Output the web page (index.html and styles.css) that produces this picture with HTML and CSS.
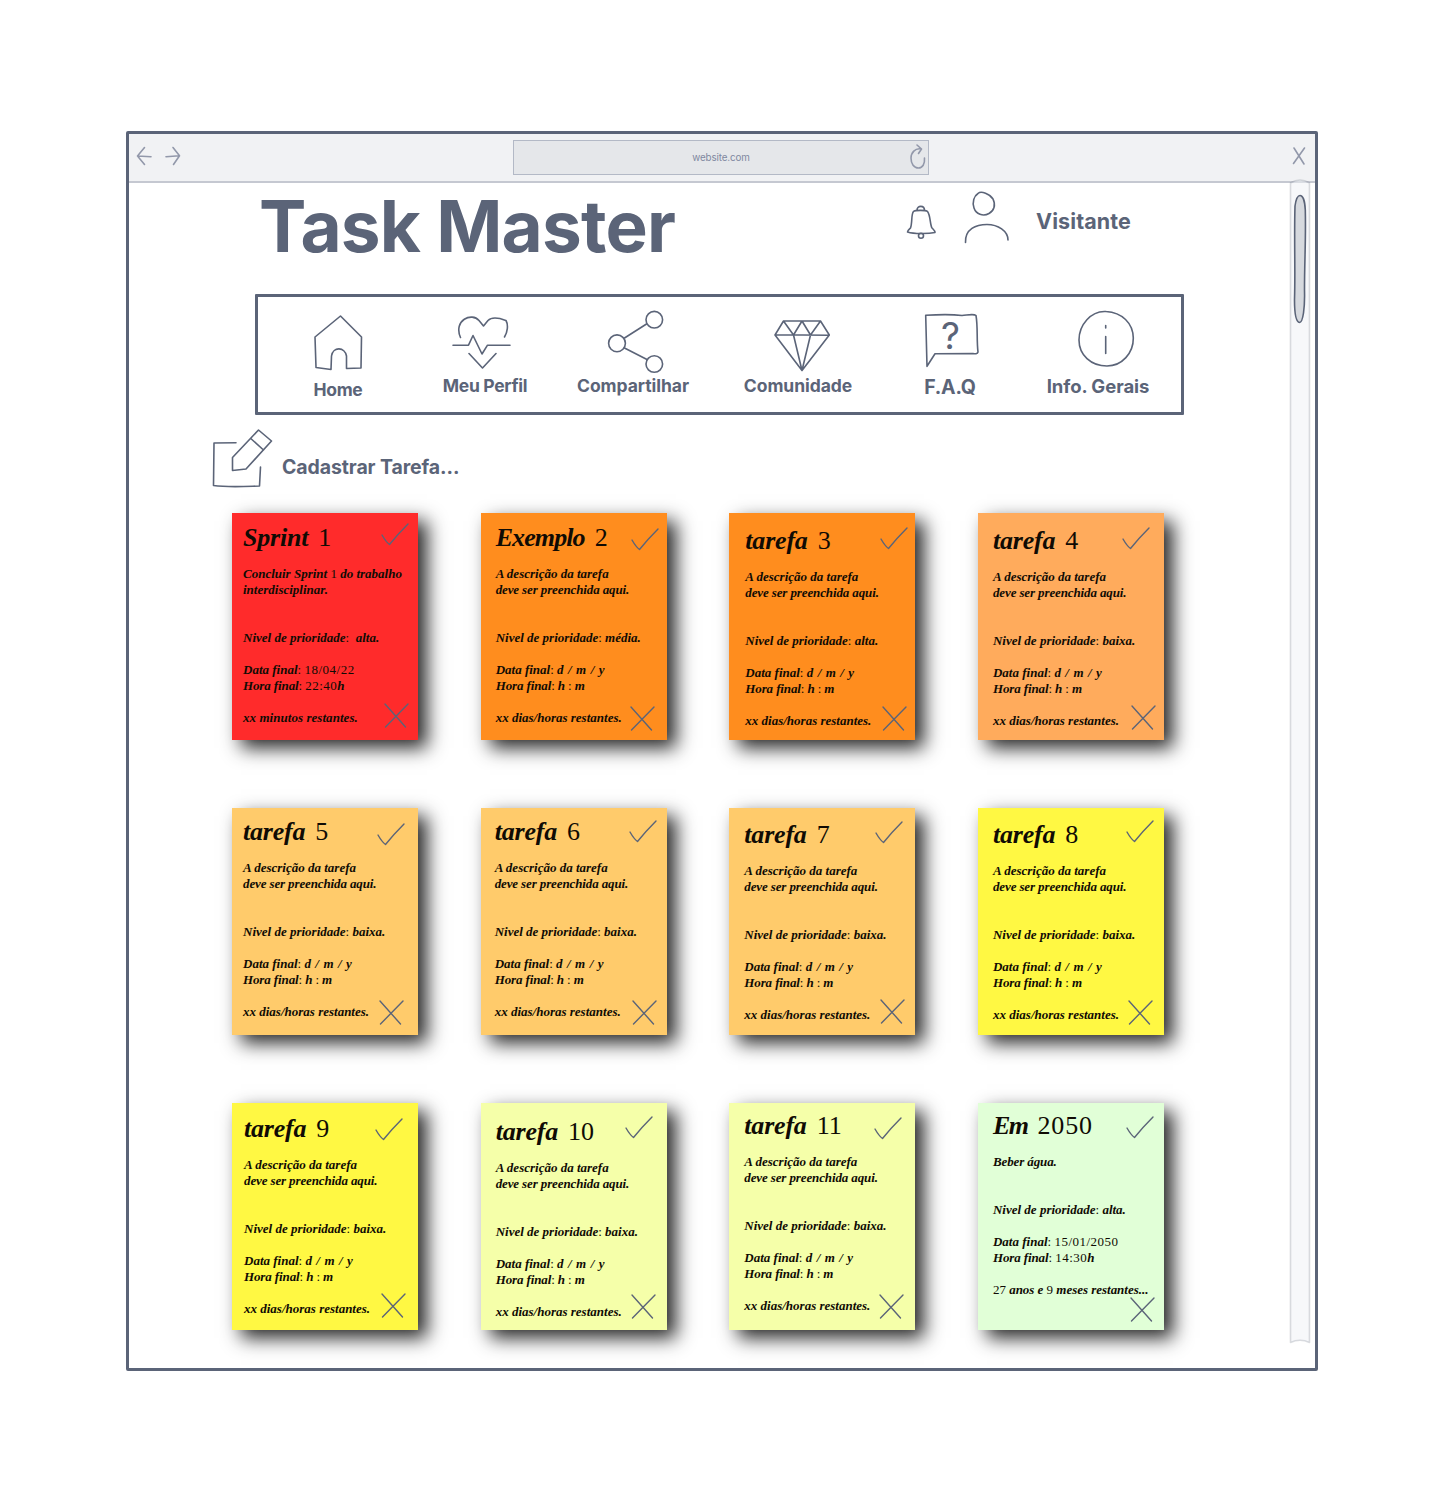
FILE: index.html
```html
<!DOCTYPE html>
<html lang="pt-BR">
<head>
<meta charset="utf-8">
<title>Task Master</title>
<link rel="stylesheet" href="styles.css">
</head>
<body>
<div class="window">
  <div class="toolbar">
    <svg class="arrows" viewBox="0 0 46 20"><path d="M8.500 1.500L1.500 10L8.500 18.500M1.500 10L15 10.700M37 1.500L43.500 9.800L37.500 18.500M43.500 9.800L30 10.700"/></svg>
    <div class="address"><span class="url">website.com</span>
      <svg class="reload" viewBox="0 0 18 26"><path d="M8 1L12.500 5L9.500 9.500M12.500 5C6 3.500 2 9 2 14C2 20 5 24 9.500 24C13.500 24 16 20 15.500 14"/></svg>
    </div>
    <svg class="close" viewBox="0 0 14 18"><path d="M2 1L12 17M12.500 1L1.500 16.500"/></svg>
  </div>

  <main>
    <header class="masthead">
      <h1>Task Master</h1>
      <div class="user">
        <svg class="bell" viewBox="0 0 30 34"><path d="M7.500 6.500C9 5 20 5 21.500 6.500C24.500 10 24 20 26 23C27.500 24.500 29 25.500 29 27.500C22 29 8 29 1.500 27C1.500 25.500 3 24.500 4.500 23C6.500 18 5 9 7.500 6.500M11 5.500C11 0 18.500 0 18.500 5.500"/><circle cx="15" cy="30.700" r="2.500"/></svg>
        <svg class="person" viewBox="0 0 46 52"><path d="M14 2.500C17-.500 26 3 29 8C32 14 30 20 25 22.500C19 26 12 23 10 17C8 11 10 5 14 2.500M1.500 51.500C1 38 12 33.500 23 33.500C34 33.500 44 40 44 49"/></svg>
        <span class="user-name">Visitante</span>
      </div>
    </header>

    <nav class="menu">
      <a class="item home"><svg viewBox="258 297 160 75"><path d="M340.500 316L361.500 337L361 368L346.500 368.500V356C345 347 333 346 331.500 356L331 369.500L316 367.500L315 337Z"/></svg><span>Home</span></a>
      <a class="item profile"><svg viewBox="418 297 134 75"><path d="M460.500 337.500C453 320 472 312 479 320.500L483.500 326L488 320.500C493 315.500 502 319 506 320.500C508.500 325 507.500 332 504.500 337M453 345.200H468.500L473 335.500L482 354L487.500 345.200H510M469 353.500L482.500 368L496 353.500"/></svg><span>Meu Perfil</span></a>
      <a class="item share"><svg viewBox="552 297 162 75"><circle cx="654.300" cy="319.700" r="8.300"/><circle cx="617" cy="343.300" r="8.400"/><circle cx="654.300" cy="364" r="8.300"/><path d="M624.500 338L646.500 324M624.500 348L647 359.500"/></svg><span>Compartilhar</span></a>
      <a class="item community"><svg viewBox="714 297 168 75"><path d="M783.500 321H820.500L829.300 335L802 370.500L775 335ZM775 334.700L829.300 335.200M783.500 321L793.500 335L802 321L810.500 335L820.500 321M793.500 335L802 370.500L810.500 335"/></svg><span>Comunidade</span></a>
      <a class="item faq"><svg viewBox="882 297 136 75"><path d="M925.700 315.300C938 314.500 950 314 962 315.500C968 315 974 313.500 976 315.500C978 327 976.500 340 978 352C977.500 354 975 354 973 353.500L935 353.700L927 366.300Z"/><text class="mark" x="950.500" y="349">?</text></svg><span>F.A.Q</span></a>
      <a class="item info"><svg viewBox="1018 297 160 75"><path d="M1106 311.500C1122 312.500 1133 323 1133.300 338C1133.500 353 1122 366 1107 366C1091 366 1079 355 1079 340C1079 325 1091 310.500 1106 311.500M1105.700 325.500V328M1105.700 336.500V353.500"/></svg><span>Info. Gerais</span></a>
    </nav>

    <div class="create">
      <svg viewBox="212 429 61 60"><path d="M236 442.700L214 443L213.500 485.500C228 487.500 244 486.500 259.500 486L260.500 467M232.500 457.500L258.500 430L271.500 441L246 469L232.500 470.500ZM250.800 438.500L263.500 450"/></svg>
      <span>Cadastrar Tarefa...</span>
    </div>

    <section class="notes">
      <article class="note n1 red">
        <h2><span class="word">Sprint</span><i>1</i></h2>
        <p class="l-own">Concluir Sprint <i>1</i> do trabalho</p><p>interdisciplinar.</p>
        <p class="priority">Nivel de prioridade<i>:</i>&nbsp; alta.</p>
        <p class="l-date">Data final<i>:</i> <i class="num">18/04/22</i></p><p class="l-time">Hora final<i>:</i> <i class="num">22:40</i>h</p>
        <p class="left l-min">xx minutos restantes.</p>
        <svg class="check" viewBox="-1 -1 28 23"><path d="M0 11Q4 18 7.500 20.500Q16 10 26 0"/></svg><svg class="cross" viewBox="-1 -1 25 25"><path d="M0 0L20.500 23M23 0L.500 23"/></svg>
      </article>
      <article class="note n2 orange">
        <h2><span class="word long">Exemplo</span><i>2</i></h2>
        <p class="l-a">A descrição da tarefa</p><p class="l-b">deve ser preenchida aqui.</p>
        <p class="priority">Nivel de prioridade<i>:</i> média.</p>
        <p class="l-date">Data final<i>:</i> <b>d / m / y</b></p><p class="l-time">Hora final<i>:</i> h <i>:</i> m</p>
        <p class="left">xx dias/horas restantes.</p>
        <svg class="check" viewBox="-1 -1 28 23"><path d="M0 11Q4 18 7.500 20.500Q16 10 26 0"/></svg><svg class="cross" viewBox="-1 -1 25 25"><path d="M0 0L20.500 23M23 0L.500 23"/></svg>
      </article>
      <article class="note n3 orange">
        <h2><span class="word">tarefa</span><i>3</i></h2>
        <p class="l-a">A descrição da tarefa</p><p class="l-b">deve ser preenchida aqui.</p>
        <p class="priority">Nivel de prioridade<i>:</i> alta.</p>
        <p class="l-date">Data final<i>:</i> <b>d / m / y</b></p><p class="l-time">Hora final<i>:</i> h <i>:</i> m</p>
        <p class="left">xx dias/horas restantes.</p>
        <svg class="check" viewBox="-1 -1 28 23"><path d="M0 11Q4 18 7.500 20.500Q16 10 26 0"/></svg><svg class="cross" viewBox="-1 -1 25 25"><path d="M0 0L20.500 23M23 0L.500 23"/></svg>
      </article>
      <article class="note n4 peach">
        <h2><span class="word">tarefa</span><i>4</i></h2>
        <p class="l-a">A descrição da tarefa</p><p class="l-b">deve ser preenchida aqui.</p>
        <p class="priority">Nivel de prioridade<i>:</i> baixa.</p>
        <p class="l-date">Data final<i>:</i> <b>d / m / y</b></p><p class="l-time">Hora final<i>:</i> h <i>:</i> m</p>
        <p class="left">xx dias/horas restantes.</p>
        <svg class="check" viewBox="-1 -1 28 23"><path d="M0 11Q4 18 7.500 20.500Q16 10 26 0"/></svg><svg class="cross" viewBox="-1 -1 25 25"><path d="M0 0L20.500 23M23 0L.500 23"/></svg>
      </article>
      <article class="note n5 sand">
        <h2><span class="word">tarefa</span><i>5</i></h2>
        <p class="l-a">A descrição da tarefa</p><p class="l-b">deve ser preenchida aqui.</p>
        <p class="priority">Nivel de prioridade<i>:</i> baixa.</p>
        <p class="l-date">Data final<i>:</i> <b>d / m / y</b></p><p class="l-time">Hora final<i>:</i> h <i>:</i> m</p>
        <p class="left">xx dias/horas restantes.</p>
        <svg class="check" viewBox="-1 -1 28 23"><path d="M0 11Q4 18 7.500 20.500Q16 10 26 0"/></svg><svg class="cross" viewBox="-1 -1 25 25"><path d="M0 0L20.500 23M23 0L.500 23"/></svg>
      </article>
      <article class="note n6 sand">
        <h2><span class="word">tarefa</span><i>6</i></h2>
        <p class="l-a">A descrição da tarefa</p><p class="l-b">deve ser preenchida aqui.</p>
        <p class="priority">Nivel de prioridade<i>:</i> baixa.</p>
        <p class="l-date">Data final<i>:</i> <b>d / m / y</b></p><p class="l-time">Hora final<i>:</i> h <i>:</i> m</p>
        <p class="left">xx dias/horas restantes.</p>
        <svg class="check" viewBox="-1 -1 28 23"><path d="M0 11Q4 18 7.500 20.500Q16 10 26 0"/></svg><svg class="cross" viewBox="-1 -1 25 25"><path d="M0 0L20.500 23M23 0L.500 23"/></svg>
      </article>
      <article class="note n7 sand">
        <h2><span class="word">tarefa</span><i>7</i></h2>
        <p class="l-a">A descrição da tarefa</p><p class="l-b">deve ser preenchida aqui.</p>
        <p class="priority">Nivel de prioridade<i>:</i> baixa.</p>
        <p class="l-date">Data final<i>:</i> <b>d / m / y</b></p><p class="l-time">Hora final<i>:</i> h <i>:</i> m</p>
        <p class="left">xx dias/horas restantes.</p>
        <svg class="check" viewBox="-1 -1 28 23"><path d="M0 11Q4 18 7.500 20.500Q16 10 26 0"/></svg><svg class="cross" viewBox="-1 -1 25 25"><path d="M0 0L20.500 23M23 0L.500 23"/></svg>
      </article>
      <article class="note n8 yellow">
        <h2><span class="word">tarefa</span><i>8</i></h2>
        <p class="l-a">A descrição da tarefa</p><p class="l-b">deve ser preenchida aqui.</p>
        <p class="priority">Nivel de prioridade<i>:</i> baixa.</p>
        <p class="l-date">Data final<i>:</i> <b>d / m / y</b></p><p class="l-time">Hora final<i>:</i> h <i>:</i> m</p>
        <p class="left">xx dias/horas restantes.</p>
        <svg class="check" viewBox="-1 -1 28 23"><path d="M0 11Q4 18 7.500 20.500Q16 10 26 0"/></svg><svg class="cross" viewBox="-1 -1 25 25"><path d="M0 0L20.500 23M23 0L.500 23"/></svg>
      </article>
      <article class="note n9 yellow">
        <h2><span class="word">tarefa</span><i>9</i></h2>
        <p class="l-a">A descrição da tarefa</p><p class="l-b">deve ser preenchida aqui.</p>
        <p class="priority">Nivel de prioridade<i>:</i> baixa.</p>
        <p class="l-date">Data final<i>:</i> <b>d / m / y</b></p><p class="l-time">Hora final<i>:</i> h <i>:</i> m</p>
        <p class="left">xx dias/horas restantes.</p>
        <svg class="check" viewBox="-1 -1 28 23"><path d="M0 11Q4 18 7.500 20.500Q16 10 26 0"/></svg><svg class="cross" viewBox="-1 -1 25 25"><path d="M0 0L20.500 23M23 0L.500 23"/></svg>
      </article>
      <article class="note n10 lime">
        <h2><span class="word">tarefa</span><i>10</i></h2>
        <p class="l-a">A descrição da tarefa</p><p class="l-b">deve ser preenchida aqui.</p>
        <p class="priority">Nivel de prioridade<i>:</i> baixa.</p>
        <p class="l-date">Data final<i>:</i> <b>d / m / y</b></p><p class="l-time">Hora final<i>:</i> h <i>:</i> m</p>
        <p class="left">xx dias/horas restantes.</p>
        <svg class="check" viewBox="-1 -1 28 23"><path d="M0 11Q4 18 7.500 20.500Q16 10 26 0"/></svg><svg class="cross" viewBox="-1 -1 25 25"><path d="M0 0L20.500 23M23 0L.500 23"/></svg>
      </article>
      <article class="note n11 lime">
        <h2><span class="word">tarefa</span><i>11</i></h2>
        <p class="l-a">A descrição da tarefa</p><p class="l-b">deve ser preenchida aqui.</p>
        <p class="priority">Nivel de prioridade<i>:</i> baixa.</p>
        <p class="l-date">Data final<i>:</i> <b>d / m / y</b></p><p class="l-time">Hora final<i>:</i> h <i>:</i> m</p>
        <p class="left">xx dias/horas restantes.</p>
        <svg class="check" viewBox="-1 -1 28 23"><path d="M0 11Q4 18 7.500 20.500Q16 10 26 0"/></svg><svg class="cross" viewBox="-1 -1 25 25"><path d="M0 0L20.500 23M23 0L.500 23"/></svg>
      </article>
      <article class="note n12 mint">
        <h2><span class="word em">Em</span><i>2050</i></h2>
        <p class="l-b">Beber água.</p>
        <p class="priority">Nivel de prioridade<i>:</i> alta.</p>
        <p class="l-date">Data final<i>:</i> <i class="num">15/01/2050</i></p><p class="l-time">Hora final<i>:</i> <i class="num">14:30</i>h</p>
        <p class="left l-years"><i>27</i> anos e <i>9</i> meses restantes...</p>
        <svg class="check" viewBox="-1 -1 28 23"><path d="M0 11Q4 18 7.500 20.500Q16 10 26 0"/></svg><svg class="cross" viewBox="-1 -1 25 25"><path d="M0 0L20.500 23M23 0L.500 23"/></svg>
      </article>
    </section>
  </main>

  <svg class="scrollbar" viewBox="1288 178 24 1168">
    <path class="track" d="M1290.500 1342.500V183Q1300 177 1309.500 183V1342.500Q1300 1338 1290.500 1342.500Z"/>
    <path class="thumb" d="M1295 206C1296 199 1298 195.500 1300 195.500C1303 195.500 1305 202 1305.300 210C1306 240 1304.500 260 1304.500 290C1305 308 1303 322.500 1299.500 322.500C1296 322 1294.500 312 1294.500 300C1295.500 270 1294 240 1295 206Z"/>
  </svg>
</div>
</body>
</html>
```
FILE: styles.css
```css
* { box-sizing: border-box; }
body {
  margin: 0;
  padding: 131px 0 0 126px;
  min-height: 1501px;
  background: #fff;
  color: #5b6478;
  font-family: Inter, "Liberation Sans", sans-serif;
}
svg { display: block; flex: none; overflow: visible; fill: none; stroke: #5b6478; stroke-width: 1.6; stroke-linecap: round; stroke-linejoin: round; }
h1, h2, p { margin: 0; }

.window {
  position: relative;
  width: 1192px;
  height: 1240px;
  border: 3px solid #5b6478;
  border-radius: 2px;
}

/* browser toolbar */
.toolbar {
  display: flex;
  align-items: flex-start;
  height: 49px;
  padding: 6px 9px 0 7px;
  background: #f1f2f4;
  border-bottom: 2px solid #c5c8d1;
}
.toolbar svg { stroke: #9298aa; }
.arrows { width: 46px; height: 20px; margin-top: 6px; }
.address {
  display: flex;
  align-items: center;
  width: 416px;
  height: 35px;
  margin-left: 331px;
  border: 1.500px solid #b3b9c6;
  background: #e5e7ea;
}
.url { flex: 1; padding-left: 19px; text-align: center; font-size: 9.800px; letter-spacing: -.1px; color: #8087a0; }
.reload { width: 18px; height: 26px; margin: 0 1px 2px 0; }
.close { width: 14px; height: 18px; margin: 7px 0 0 auto; }

/* page header */
.masthead { display: flex; height: 111px; padding: 0 184px 0 130px; }
h1 { font-size: 71px; line-height: 87px; font-weight: 700; letter-spacing: -.8px; white-space: nowrap; }
.user { display: flex; align-items: flex-start; margin-left: auto; }
.bell { width: 30px; height: 34px; margin-top: 22px; }
.person { width: 46px; height: 52px; margin: 8px 0 0 28px; }
.user-name { width: 95px; margin-left: 26px; font-size: 21.500px; line-height: 77px; font-weight: 650; letter-spacing: .1px; white-space: nowrap; }

/* main menu */
.menu {
  display: grid;
  grid-template-columns: 160px 134px 162px 168px 136px 160px;
  width: 929px;
  height: 121px;
  margin-left: 126px;
  border: 3px solid #5b6478;
  border-radius: 1px;
}
.item { display: flex; flex-direction: column; align-items: center; font-size: 17.500px; line-height: 28px; font-weight: 650; letter-spacing: -.05px; white-space: nowrap; }
.item svg { width: 100%; height: 75px; }
.item.home span { margin-top: 4px; }
.item.home, .item.profile { letter-spacing: -.3px; }
.item.faq span { font-size: 19.500px; margin-top: 1px; letter-spacing: -.2px; }
.item.info { font-size: 18.500px; }
.mark { fill: #5b6478; stroke: none; font-size: 37px; font-weight: 400; letter-spacing: 0; text-anchor: middle; }

.create { display: flex; height: 97.500px; padding: 14px 0 0 83px; font-size: 19.500px; font-weight: 650; letter-spacing: -.1px; }
.create svg { width: 61px; height: 60px; }
.create span { margin-left: 9px; line-height: 76px; white-space: nowrap; }

/* sticky notes */
.notes {
  display: grid;
  grid-template-columns: repeat(4, 186px);
  grid-auto-rows: 227px;
  gap: 68px 62.670px;
  margin-left: 103px;
}
.note {
  --dy: 0px;
  --dx: 15px;
  position: relative;
  padding: calc(9px + var(--dy)) 0 0 var(--dx);
  box-shadow: 9px 8px 18px rgba(0, 0, 0, .85);
  color: #100b04;
  font: italic 700 13px/16px "Liberation Serif", serif;
  white-space: nowrap;
}
.note h2 { display: flex; gap: 10px; height: 44px; font-size: 26px; line-height: 32px; }
.note i { font-style: normal; font-weight: 400; }
.note b { word-spacing: 1.200px; }
.note .word { letter-spacing: -.2px; }
.note .long { letter-spacing: -.9px; }
.note .em { letter-spacing: -1.500px; }
.note .em + i { letter-spacing: .8px; }
.num { letter-spacing: .5px; }
.l-b, .l-time { letter-spacing: -.12px; }
.l-min { letter-spacing: .05px; }
.l-years { letter-spacing: -.02px; }
.priority { margin: 32px 0 16px; }
.left { margin-top: 16px; }
.check, .cross { position: absolute; stroke-width: 1.400; }
.check { width: 28px; height: 23px; left: calc(var(--cx) - 1px); top: calc(var(--cy) - 1px); }
.cross { width: 25px; height: 25px; left: calc(var(--xx) - .500px); top: calc(var(--xy) - 1px); }

.red { background: #ff2b2b; }
.orange { background: #ff8d1e; }
.peach { background: #ffab5c; }
.sand { background: #ffcb6b; }
.yellow { background: #fff843; }
.lime { background: #f5ffa9; }
.mint { background: #e1ffd7; }

.n1 { --dx: 11px; --cx: 150px; --cy: 11.500px; --xx: 152.500px; --xy: 191.500px; }
.n2 { --cx: 151px; --cy: 16px; --xx: 150px; --xy: 194px; }
.n3 { --dx: 16px; --dy: 3px; --cx: 151.500px; --cy: 15.500px; --xx: 153.500px; --xy: 194.500px; }
.n4 { --dy: 3px; --cx: 145.500px; --cy: 15.500px; --xx: 153.500px; --xy: 193px; }
.n5 { --dx: 11px; --dy: -1px; --cx: 146px; --cy: 16.500px; --xx: 147.500px; --xy: 193px; }
.n6 { --dx: 14px; --dy: -1px; --cx: 149px; --cy: 13.500px; --xx: 151.500px; --xy: 193px; }
.n7 { --dy: 2px; --cx: 146.500px; --cy: 14px; --xx: 151.500px; --xy: 192px; }
.n8 { --dy: 2px; --cx: 149px; --cy: 13.500px; --xx: 151px; --xy: 193px; }
.n9 { --dx: 12px; --dy: 1px; --cx: 144.300px; --cy: 16.500px; --xx: 149.500px; --xy: 191px; }
.n10 { --dy: 4px; --cx: 145px; --cy: 14.500px; --xx: 151px; --xy: 192px; }
.n11 { --dy: -2px; --cx: 146px; --cy: 15px; --xx: 150.500px; --xy: 192px; }
.n12 { --dy: -2px; --cx: 149px; --cy: 14.500px; --xx: 153px; --xy: 195px; }

.scrollbar { position: absolute; left: 1159px; top: 44px; width: 24px; height: 1168px; }
.track { fill: rgba(240, 242, 246, .5); stroke: rgba(91, 100, 120, .22); }
.thumb { fill: #d6d9de; }
```
